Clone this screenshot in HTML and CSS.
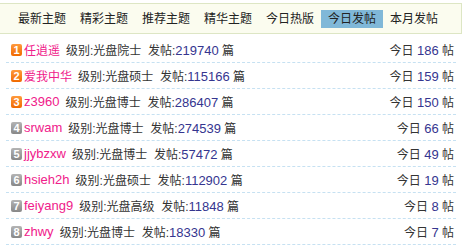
FILE: index.html
```html
<!DOCTYPE html>
<html lang="zh-CN">
<head>
  <meta charset="UTF-8">
  <title>今日发帖</title>
  <link rel="stylesheet" href="styles.css">
</head>
<body>
  <!-- Tabs -->
  <div class="tabs">
    <span class="tab">最新主题</span>
    <span class="tab">精彩主题</span>
    <span class="tab">推荐主题</span>
    <span class="tab">精华主题</span>
    <span class="tab">今日热版</span>
    <span class="tab active">今日发帖</span>
    <span class="tab">本月发帖</span>
  </div>

  <!-- Ranking list -->
  <ul class="rank">
    <li class="row">
      <span class="badge top">1</span><a class="name">任逍遥</a>
      <span class="info">级别:光盘院士 &nbsp;发帖:<em>219740</em> 篇</span>
      <span class="today">今日 <em>186</em> 帖</span>
    </li>
    <li class="row">
      <span class="badge top">2</span><a class="name">爱我中华</a>
      <span class="info">级别:光盘硕士 &nbsp;发帖:<em>115166</em> 篇</span>
      <span class="today">今日 <em>159</em> 帖</span>
    </li>
    <li class="row">
      <span class="badge top">3</span><a class="name latin">z3960</a>
      <span class="info">级别:光盘博士 &nbsp;发帖:<em>286407</em> 篇</span>
      <span class="today">今日 <em>150</em> 帖</span>
    </li>
    <li class="row">
      <span class="badge">4</span><a class="name latin">srwam</a>
      <span class="info">级别:光盘博士 &nbsp;发帖:<em>274539</em> 篇</span>
      <span class="today">今日 <em>66</em> 帖</span>
    </li>
    <li class="row">
      <span class="badge">5</span><a class="name latin">jjybzxw</a>
      <span class="info">级别:光盘博士 &nbsp;发帖:<em>57472</em> 篇</span>
      <span class="today">今日 <em>49</em> 帖</span>
    </li>
    <li class="row">
      <span class="badge">6</span><a class="name latin">hsieh2h</a>
      <span class="info">级别:光盘硕士 &nbsp;发帖:<em>112902</em> 篇</span>
      <span class="today">今日 <em>19</em> 帖</span>
    </li>
    <li class="row">
      <span class="badge">7</span><a class="name latin">feiyang9</a>
      <span class="info">级别:光盘高级 &nbsp;发帖:<em>11848</em> 篇</span>
      <span class="today">今日 <em>8</em> 帖</span>
    </li>
    <li class="row">
      <span class="badge">8</span><a class="name latin">zhwy</a>
      <span class="info">级别:光盘博士 &nbsp;发帖:<em>18330</em> 篇</span>
      <span class="today">今日 <em>7</em> 帖</span>
    </li>
  </ul>
</body>
</html>
```

FILE: styles.css
```css
/* Base */
body {
  margin: 0;
  background: #fff;
  color: #333;
  font-family: 'Liberation Sans', 'Noto Sans CJK SC', sans-serif;
  font-size: 12px;
}

/* Tab bar */
.tabs {
  display: flex;
  align-items: center;
  width: 450px;
  height: 29px;
  margin-top: 3px;
  padding-left: 11px;
  background: #fbfcef;
  border-top: 1px solid #dde6c4;
  border-bottom: 1px solid #dde6c4;
  border-right: 1px solid #dde6c4;
}

.tab {
  padding: 0 7px;
  line-height: 18px;
  color: #222;
}

.tab.active {
  background: #80b8d8;
}

/* Ranking list */
.rank {
  list-style: none;
  margin: 3px 0 0;
  padding: 0 8px 0 6px;
}

.row {
  display: flex;
  align-items: center;
  height: 25px;
  padding: 0 2px 0 5px;
  border-bottom: 1px dashed #c6e1f2;
}

.badge {
  width: 11px;
  height: 12px;
  margin-right: 2px;
  border-radius: 2px;
  background: linear-gradient(#b4b4b4, #888);
  color: #fff;
  font-size: 11px;
  font-weight: bold;
  line-height: 12px;
  text-align: center;
}

.badge.top {
  background: linear-gradient(#ff9a3c, #f06a00);
}

.name {
  color: #f0208a;
  margin-right: 6px;
}

.name.latin {
  font-size: 13px;
}

.info em,
.today em {
  font-style: normal;
  font-size: 13px;
  color: #35358f;
}

.today {
  margin-left: auto;
}
```
